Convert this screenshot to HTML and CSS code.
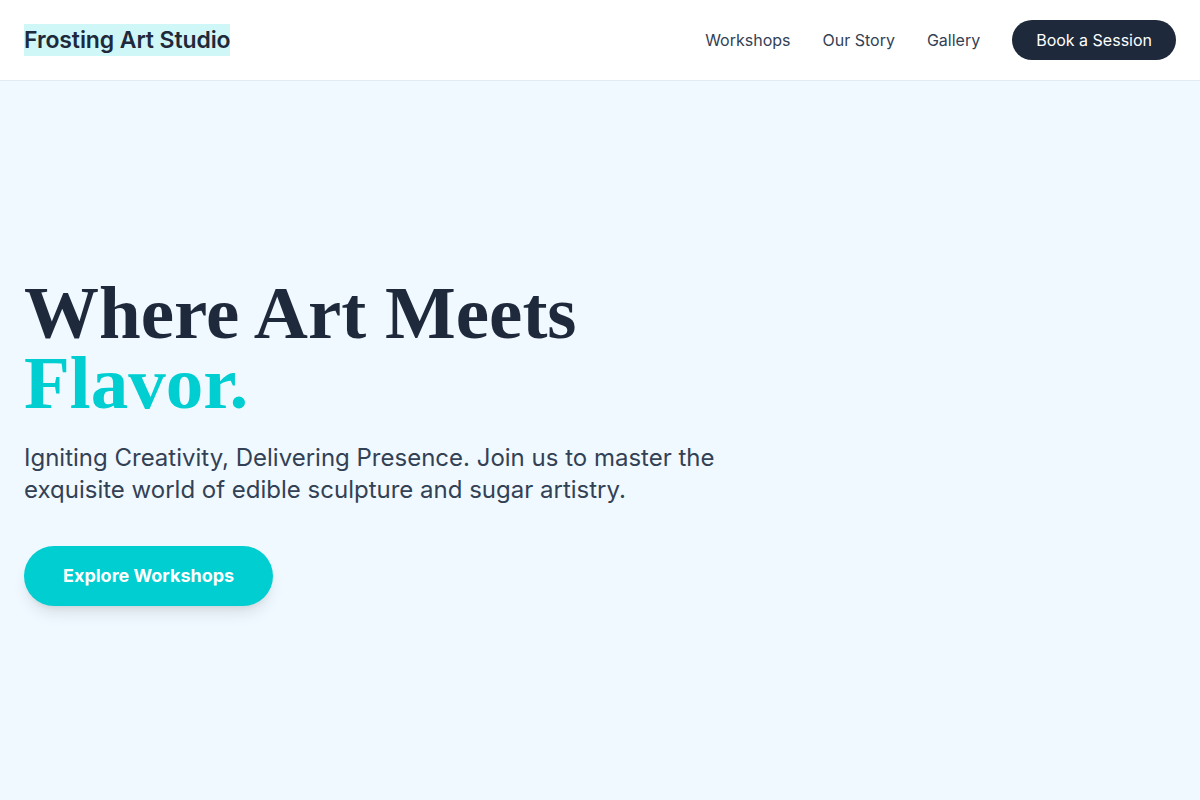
FILE: index.html
```html
<!DOCTYPE html>
<html lang="en">
<head>
<meta charset="utf-8">
<title>Frosting Art Studio</title>
<link rel="stylesheet" href="styles.css">
</head>
<body>
<header class="site-header">
  <a class="logo" href="#">Frosting Art Studio</a>
  <nav class="nav">
    <a class="nav-link" href="#">Workshops</a>
    <a class="nav-link" href="#">Our Story</a>
    <a class="nav-link" href="#">Gallery</a>
    <a class="nav-cta" href="#">Book a Session</a>
  </nav>
</header>
<main class="hero">
  <div class="hero-inner">
    <h1 class="hero-title">Where Art Meets<br><span class="accent">Flavor.</span></h1>
    <p class="hero-text">Igniting Creativity, Delivering Presence. Join us to master the exquisite world of edible sculpture and sugar artistry.</p>
    <a class="hero-btn" href="#">Explore Workshops</a>
  </div>
</main>
</body>
</html>
```
FILE: styles.css
```css
* { box-sizing: border-box; }
html, body { margin: 0; padding: 0; }
body {
  font-family: Inter, "Noto Sans", sans-serif;
  color: #1e293b;
  background: #f0f9ff;
}
a { text-decoration: none; color: inherit; }
.site-header {
  height: 81px;
  background: #ffffff;
  border-bottom: 1px solid #e2eaf3;
  display: flex;
  align-items: center;
  justify-content: space-between;
  padding: 0 24px;
}
.logo {
  font-size: 23px;
  font-weight: 600;
  color: #1e293b;
  background: #cff7f8;
  line-height: 32px;
  letter-spacing: -0.1px;
}
.nav {
  display: flex;
  align-items: center;
  gap: 32px;
}
.nav-link {
  font-size: 16px;
  color: #334155;
}
.nav-cta {
  background: #1e293b;
  color: #ffffff;
  font-size: 16px;
  height: 40px;
  padding: 0 24px;
  border-radius: 9999px;
  display: flex;
  align-items: center;
}
.hero {
  min-height: 719px;
  display: flex;
  align-items: center;
  padding: 0 24px;
}
.hero-inner {
  padding-top: 2px;
}
.hero-title {
  font-family: "Liberation Serif", "DejaVu Serif", serif;
  font-weight: 700;
  font-size: 75px;
  line-height: 70px;
  margin: 0 0 24px;
  color: #1e293b;
}
.accent { color: #00ced1; }
.hero-text {
  font-size: 24px;
  line-height: 32px;
  color: #334155;
  max-width: 768px;
  margin: 0 0 40px;
}
.hero-btn {
  display: inline-flex;
  align-items: center;
  height: 60px;
  padding: 0 39px 1px;
  border-radius: 9999px;
  background: #00ced1;
  color: #ffffff;
  font-size: 18px;
  font-weight: 700;
  box-shadow: 0 10px 15px -3px rgba(0, 0, 0, 0.1), 0 4px 6px -4px rgba(0, 0, 0, 0.1);
}
```
